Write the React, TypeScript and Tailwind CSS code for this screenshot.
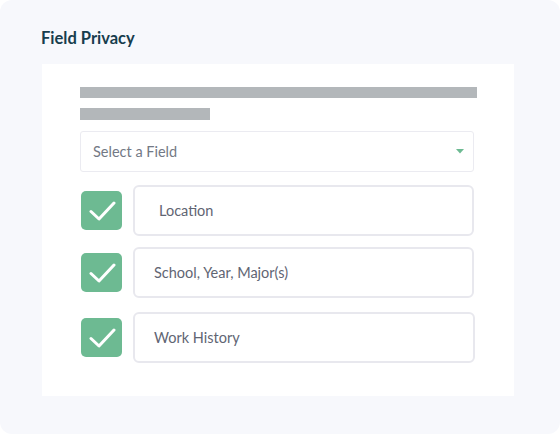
import React from 'react';

const fields = [
    { label: 'Location', pad: 'pl-[24px]', input: 'w-[341px]' },
    { label: 'School, Year, Major(s)', pad: 'pl-[19px]', input: 'w-[341px]' },
    { label: 'Work History', pad: 'pl-[19px]', input: 'w-[342px]' },
];

const CheckBox: React.FC = () => (
    <div className="w-[41px] h-[39px] rounded-[5px] bg-[#6dba92] flex items-center justify-center shrink-0">
        <svg width="28" height="22" viewBox="0 0 28 22" fill="none">
            <path d="M3 11.5 L11 19 L26 3" stroke="white" strokeWidth="3" strokeLinecap="round" strokeLinejoin="round" />
        </svg>
    </div>
);

const App: React.FC = () => {
    return (
        <div className="w-[560px] h-[434px] bg-white" style={{ fontFamily: 'Lato, "Noto Sans", sans-serif' }}>
            <div className="w-full h-full rounded-[12px] bg-[#f7f8fc] pt-[28px] pl-[41px]">
                {/* Title */}
                <h2 className="text-[16.5px] leading-[20px] font-bold text-[#173d4d]">Field Privacy</h2>

                {/* Panel */}
                <div className="mt-[16px] ml-px w-[472px] h-[332px] bg-white pt-[23px] pl-[38px]">
                    <div className="w-[397px] h-[11px] bg-[#b3b7ba]" />
                    <div className="mt-[10px] w-[130px] h-[12px] bg-[#b3b7ba]" />

                    {/* Select */}
                    <div className="mt-[11px] w-[394px] h-[41px] border border-[#ebebf1] rounded-[3px] flex items-center justify-between pl-[12px] pr-[9px]">
                        <span className="text-[14.5px] text-[#737985]">Select a Field</span>
                        <svg width="8" height="5" viewBox="0 0 8 5">
                            <path d="M0 0 H8 L4 4.5 Z" fill="#6dba92" />
                        </svg>
                    </div>

                    {/* Rows */}
                    {fields.map((f, i) => (
                        <div key={f.label} className={`flex items-center gap-[11px] ${i === 0 ? 'mt-[13px]' : i === 1 ? 'mt-[11px]' : 'mt-[14px]'}`}>
                            <div className="ml-px">
                                <CheckBox />
                            </div>
                            <div className={`${f.input} h-[51px] border-2 border-[#e8e8ee] rounded-[6px] flex items-center ${f.pad}`}>
                                <span className="text-[14.5px] text-[#5f6573]">{f.label}</span>
                            </div>
                        </div>
                    ))}
                </div>
            </div>
        </div>
    );
};

export default App;
